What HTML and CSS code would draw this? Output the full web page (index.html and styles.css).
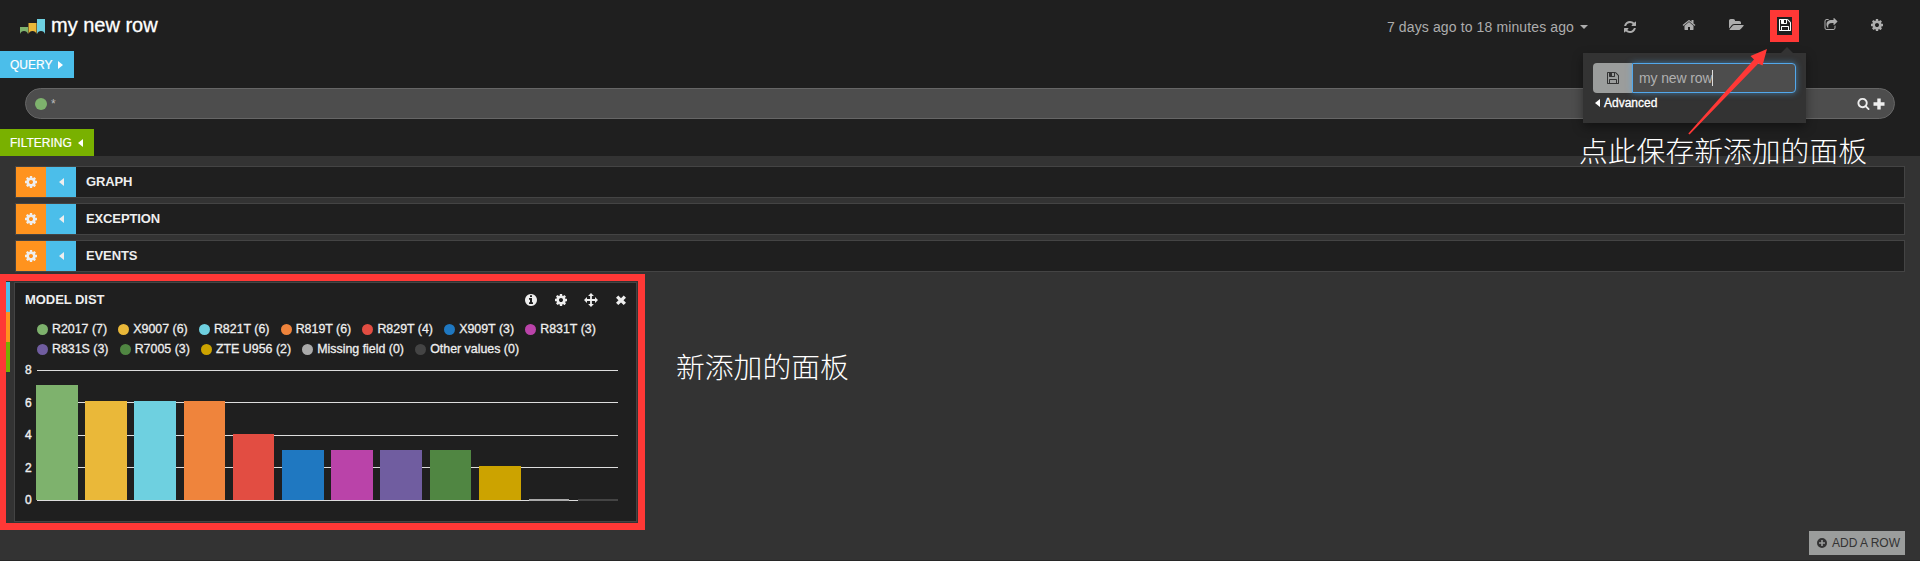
FILE: index.html
```html
<!DOCTYPE html>
<html lang="en">
<head>
<meta charset="utf-8">
<title>my new row</title>
<link rel="stylesheet" href="styles.css">
</head>
<body>
<svg class="sprite" width="0" height="0" aria-hidden="true">
  <symbol id="cog" viewBox="0 0 1792 1792"><path d="M1152 896q0-106-75-181t-181-75-181 75-75 181 75 181 181 75 181-75 75-181zm512-109v222q0 12-8 23t-20 13l-185 28q-19 54-39 91 35 50 107 138 10 12 10 25t-9 23q-27 37-99 108t-94 71q-12 0-26-9l-138-108q-44 23-91 38-16 136-29 186-7 28-36 28h-222q-14 0-24.500-8.500t-11.500-21.500l-28-184q-49-16-90-37l-141 107q-10 9-25 9-14 0-25-11-126-114-165-168-7-10-7-23 0-12 8-23 15-21 51-66.500t54-70.500q-27-50-41-99l-183-27q-13-2-21-12.500t-8-23.500v-222q0-12 8-23t19-13l186-28q14-46 39-92-40-57-107-138-10-12-10-24 0-10 9-23 26-36 98.500-107.500t94.500-71.500q13 0 26 10l138 107q44-23 91-38 16-136 29-186 7-28 36-28h222q14 0 24.500 8.500t11.500 21.500l28 184q49 16 90 37l142-107q9-9 24-9 13 0 25 10 129 119 165 170 7 8 7 22 0 12-8 23-15 21-51 66.500t-54 70.500q26 50 41 98l183 28q13 2 21 12.500t8 23.500z"/></symbol>
  <symbol id="home" viewBox="0 0 1792 1792"><path d="M1472 992v480q0 26-19 45t-45 19h-384v-384h-256v384h-384q-26 0-45-19t-19-45v-480q0-1 .5-3t.5-3l575-474 575 474q1 2 1 6zm223-69l-62 74q-8 9-21 11h-3q-13 0-21-7l-692-577-692 577q-12 8-24 7-13-2-21-11l-62-74q-8-10-7-23.500t11-21.500l719-599q32-26 76-26t76 26l244 204v-195q0-14 9-23t23-9h192q14 0 23 9t9 23v408l219 182q10 8 11 21.500t-7 23.500z"/></symbol>
  <symbol id="refresh" viewBox="0 0 1792 1792"><path d="M1639 1056q0 5-1 7-64 268-268 434.500t-478 166.500q-146 0-282.500-55t-243.500-157l-129 129q-19 19-45 19t-45-19-19-45v-448q0-26 19-45t45-19h448q26 0 45 19t19 45-19 45l-137 137q71 66 161 102t187 36q134 0 250-65t186-179q11-17 53-117 8-23 30-23h192q13 0 22.500 9.500t9.500 22.500zm25-800v448q0 26-19 45t-45 19h-448q-26 0-45-19t-19-45 19-45l138-138q-148-137-349-137-134 0-250 65t-186 179q-11 17-53 117-8 23-30 23h-199q-13 0-22.500-9.500t-9.500-22.500v-7q65-268 270-434.500t480-166.500q146 0 284 55.500t245 156.500l130-129q19-19 45-19t45 19 19 45z"/></symbol>
  <symbol id="folder" viewBox="0 0 1920 1792"><path d="M1879 952q0 31-31 66l-336 396q-43 51-120.500 86.500t-143.500 35.500h-1088q-34 0-60.500-13t-26.500-43q0-31 31-66l336-396q43-51 120.500-86.500t143.500-35.500h1088q34 0 60.500 13t26.500 43zm-343-344v160h-832q-94 0-197 47.500t-164 119.500l-337 396-5 6q0-4-.5-12.500t-.5-12.500v-960q0-92 66-158t158-66h320q92 0 158 66t66 158v32h544q92 0 158 66t66 158z"/></symbol>
  <symbol id="save" viewBox="0 0 1792 1792"><path d="M512 1536h768v-384h-768v384zm896 0h128v-896q0-14-10-38.500t-20-34.500l-281-281q-10-10-34-20t-39-10v416q0 40-28 68t-68 28h-576q-40 0-68-28t-28-68v-416h-128v1280h128v-416q0-40 28-68t68-28h832q40 0 68 28t28 68v416zm-384-928v-320q0-13-9.500-22.500t-22.500-9.500h-192q-13 0-22.500 9.500t-9.500 22.500v320q0 13 9.500 22.500t22.500 9.500h192q13 0 22.500-9.500t9.500-22.500zm640 32v928q0 40-28 68t-68 28h-1344q-40 0-68-28t-28-68v-1344q0-40 28-68t68-28h928q40 0 88 20t76 48l280 280q28 28 48 76t20 88z"/></symbol>
  <symbol id="share" viewBox="0 0 1792 1792"><path d="M1472 989v259q0 119-84.500 203.500t-203.500 84.500h-832q-119 0-203.500-84.500t-84.500-203.500v-832q0-119 84.500-203.500t203.500-84.500h255q13 0 22.500 9.500t9.500 22.500q0 27-26 32-77 26-133 60-10 4-16 4h-112q-66 0-113 47t-47 113v832q0 66 47 113t113 47h832q66 0 113-47t47-113v-214q0-19 18-29 28-13 54-37 16-16 35-8 21 9 21 29zm237-496l-384 384q-18 19-45 19-12 0-25-5-39-17-39-59v-192h-160q-323 0-438 131-119 137-74 473 3 23-20 34-8 2-12 2-16 0-26-13-10-14-21-31t-39.500-68.500-49.500-99.500-38.500-114-17.500-122q0-49 3.500-91t14-90 28-88 47-81.500 68.500-74 94.500-61.500 124.500-48.500 159.500-30.500 196.500-11h160v-192q0-42 39-59 13-5 25-5 26 0 45 19l384 384q19 19 19 45t-19 45z"/></symbol>
  <symbol id="search" viewBox="0 0 1792 1792"><path d="M1216 832q0-185-131.500-316.500t-316.500-131.500-316.500 131.500-131.500 316.500 131.500 316.500 316.500 131.500 316.500-131.500 131.500-316.500zm512 832q0 52-38 90t-90 38q-54 0-90-38l-343-342q-179 124-399 124-143 0-273.500-55.500t-225-150-150-225-55.500-273.500 55.500-273.500 150-225 225-150 273.500-55.500 273.500 55.500 225 150 150 225 55.500 273.500q0 220-124 399l343 343q37 37 37 90z"/></symbol>
  <symbol id="info" viewBox="0 0 1792 1792"><path d="M1152 1376v-160q0-14-9-23t-23-9h-96v-512q0-14-9-23t-23-9h-320q-14 0-23 9t-9 23v160q0 14 9 23t23 9h96v320h-96q-14 0-23 9t-9 23v160q0 14 9 23t23 9h448q14 0 23-9t9-23zm-128-896v-160q0-14-9-23t-23-9h-192q-14 0-23 9t-9 23v160q0 14 9 23t23 9h192q14 0 23-9t9-23zm640 416q0 209-103 385.500t-279.500 279.500-385.500 103-385.500-103-279.500-279.500-103-385.500 103-385.500 279.500-279.500 385.500-103 385.500 103 279.500 279.500 103 385.500z"/></symbol>
  <symbol id="plus" viewBox="0 0 14 14"><path d="M5.300 1.500h3.400v3.800h3.800v3.400h-3.800v3.800h-3.400v-3.800h-3.800v-3.400h3.800z"/></symbol>
  <symbol id="move" viewBox="0 0 14 14"><path d="M7 0l2.900 3h-2v3.100h3.100v-2l3 2.900-3 2.900v-2h-3.100v3.100h2l-2.900 3-2.900-3h2v-3.100h-3.100v2l-3-2.900 3-2.900v2h3.100v-3.100h-2z"/></symbol>
  <symbol id="close" viewBox="0 0 14 14"><path d="M4.300 2.500l2.700 2.700 2.700-2.700 2.300 2.300-2.500 2.500 2.500 2.500-2.300 2.200-2.700-2.600-2.700 2.600-2.300-2.200 2.500-2.500-2.500-2.500z"/></symbol>
  <symbol id="left" viewBox="0 0 5 8"><path d="M5 0v8l-5-4z"/></symbol>
  <symbol id="right" viewBox="0 0 5 8"><path d="M0 0v8l5-4z"/></symbol>
</svg>

<div class="dashboard">
  <header class="top">
    <nav class="navbar">
      <svg class="logo" width="26" height="16" viewBox="0 0 26 16">
        <path fill="#7eb26d" d="M0 8h8v7q-1-3-4-3t-4 3z"/>
        <path fill="#eab839" d="M8.500 4h8v11q-1-3-4-3t-4 3z"/>
        <path fill="#6ed0e0" d="M17 0h8v15q-1-3-4-3t-4 3z"/>
      </svg>
      <span class="brand">my new row</span>
      <div class="controls">
        <span class="time">7 days ago to 18 minutes ago</span>
        <svg class="caret" width="8" height="4" viewBox="0 0 8 4"><path d="M0 0h8l-4 4z"/></svg>
        <svg class="icon refresh"><use href="#refresh"/></svg>
        <svg class="icon"><use href="#home"/></svg>
        <svg class="icon folder"><use href="#folder"/></svg>
        <span class="save"><svg class="icon"><use href="#save"/></svg></span>
        <svg class="icon"><use href="#share"/></svg>
        <svg class="icon settings"><use href="#cog"/></svg>
      </div>
    </nav>
    <div class="tag tag-query">QUERY <svg width="5" height="8"><use href="#right"/></svg></div>
    <div class="query">
      <span class="query-dot"></span><span class="query-text">*</span>
      <svg class="query-search" width="13" height="13"><use href="#search"/></svg>
      <svg width="14" height="14"><use href="#plus"/></svg>
    </div>
    <div class="tag tag-filter">FILTERING <svg width="5" height="8"><use href="#left"/></svg></div>
  </header>

  <main>
    <section class="row"><span class="btn orange"><svg class="icon"><use href="#cog"/></svg></span><span class="btn blue"><svg width="5" height="8"><use href="#left"/></svg></span><span class="row-title">GRAPH</span></section>
    <section class="row"><span class="btn orange"><svg class="icon"><use href="#cog"/></svg></span><span class="btn blue"><svg width="5" height="8"><use href="#left"/></svg></span><span class="row-title">EXCEPTION</span></section>
    <section class="row"><span class="btn orange"><svg class="icon"><use href="#cog"/></svg></span><span class="btn blue"><svg width="5" height="8"><use href="#left"/></svg></span><span class="row-title">EVENTS</span></section>

    <div class="new-row">
      <div class="highlight">
        <div class="handles"><i class="blue"></i><i class="orange"></i><i class="green"></i></div>
        <section class="panel">
          <div class="panel-head">
            <span class="panel-title">MODEL DIST</span>
            <svg class="icon"><use href="#info"/></svg>
            <svg class="icon"><use href="#cog"/></svg>
            <svg class="icon"><use href="#move"/></svg>
            <svg class="icon"><use href="#close"/></svg>
          </div>
          <div class="legend">
            <div class="legend-line">
              <span class="key c1">R2017 (7)</span><span class="key c2">X9007 (6)</span><span class="key c3">R821T (6)</span><span class="key c4">R819T (6)</span><span class="key c5">R829T (4)</span><span class="key c6">X909T (3)</span><span class="key c7">R831T (3)</span>
            </div>
            <div class="legend-line">
              <span class="key c8">R831S (3)</span><span class="key c9">R7005 (3)</span><span class="key c10">ZTE U956 (2)</span><span class="key c11">Missing field (0)</span><span class="key c12">Other values (0)</span>
            </div>
          </div>
          <div class="chart">
            <div class="axis"><span>8</span><span>6</span><span>4</span><span>2</span><span>0</span></div>
            <svg class="plot" width="583" height="134" viewBox="0 0 583 134" shape-rendering="crispEdges">
              <path class="grid" d="M1 1.500h581M1 33.500h581M1 66.500h581M1 98.500h581M1 131.500h581"/>
              <rect x="0" y="16" width="42" height="115" fill="#7eb26d"/>
              <rect x="49" y="32" width="42" height="99" fill="#eab839"/>
              <rect x="98" y="32" width="42" height="99" fill="#6ed0e0"/>
              <rect x="148" y="32" width="41" height="99" fill="#ef843c"/>
              <rect x="197" y="65" width="41" height="66" fill="#e24d42"/>
              <rect x="246" y="81" width="42" height="50" fill="#1f78c1"/>
              <rect x="295" y="81" width="42" height="50" fill="#ba43a9"/>
              <rect x="344" y="81" width="42" height="50" fill="#705da0"/>
              <rect x="394" y="81" width="41" height="50" fill="#508642"/>
              <rect x="443" y="97" width="42" height="34" fill="#cca300"/>
              <rect x="493" y="130" width="40" height="2" fill="#aaaaaa"/>
              <rect x="542" y="130" width="40" height="2" fill="#444444"/>
            </svg>
          </div>
        </section>
      </div>
      <div class="note">新添加的面板</div>
    </div>
    <div class="add"><svg width="10" height="10" viewBox="0 0 10 10"><path fill-rule="evenodd" d="M5 0a5 5 0 1 1 0 10a5 5 0 1 1 0-10zM4.200 2v2.200h-2.200v1.600h2.200v2.200h1.600v-2.200h2.200v-1.600h-2.200v-2.200z"/></svg>ADD A ROW</div>
  </main>

  <div class="popover">
    <div class="save-form">
      <span class="save-btn"><svg class="icon"><use href="#save"/></svg></span>
      <span class="save-input">my new row<i></i></span>
    </div>
    <div class="advanced"><svg width="5" height="8"><use href="#left"/></svg>Advanced</div>
  </div>
  <svg class="arrow" width="80" height="87" viewBox="0 0 80 87"><path d="M79 0L74.500 16.500l-4.200-2L1.500 85.500 .3 84.500 66 10.500l-3.500-3.500z"/></svg>
  <div class="note note-save">点此保存新添加的面板</div>
</div>
</body>
</html>
```
FILE: styles.css
```css
* { box-sizing: border-box; }
body {
  margin: 0;
  background: #333;
  font: 12px/20px "Liberation Sans", Arial, sans-serif;
  color: #eee;
}
svg { display: block; fill: currentColor; flex: none; }
.sprite { position: absolute; }
.icon { width: 14px; height: 14px; }
.dashboard {
  position: relative;
  width: 1920px;
  height: 561px;
  overflow: hidden;
  border-bottom: 1px solid #272727;
}
.top { height: 156px; background: #1f1f1f; }

.navbar { display: flex; height: 51px; padding-left: 20px; align-items: flex-start; }
.logo { margin-top: 19px; }
.brand {
  margin: 15px 0 0 5px;
  font-size: 20px;
  line-height: 20px;
  color: #fff;
  -webkit-text-stroke: .3px #fff;
}
.controls {
  display: flex;
  align-items: center;
  height: 50px;
  margin-left: auto;
  padding-right: 36px;
  color: #adadad;
}
.time { margin-top: 3px; font-size: 14px; letter-spacing: .12px; }
.caret { margin: 3px 35px 0 6px; }
.refresh { margin: 3px 45px 0 0; }
.folder { width: 15px; margin-left: 33px; }
.save {
  display: flex;
  align-items: center;
  justify-content: center;
  width: 29px;
  height: 32px;
  margin: 2px 25px 0 26px;
  padding-bottom: 2px;
  border: 7px solid #ff3836;
  color: #fff;
}
.settings { margin-left: 32px; }

.tag {
  display: flex;
  align-items: center;
  gap: 6px;
  height: 27px;
  padding-left: 10px;
  color: #fff;
  -webkit-text-stroke: .2px #fff;
}
.tag-query { width: 74px; background: #4bbeea; }
.tag-filter { width: 94px; background: #79b100; }
.query {
  display: flex;
  align-items: center;
  height: 31px;
  margin: 10px 25px;
  padding: 0 8px 0 9px;
  border: 1px solid #666;
  border-radius: 16px;
  background: #4d4d4d;
}
.query-dot { width: 12px; height: 12px; margin-right: 4px; border-radius: 50%; background: #7eb26d; }
.query-text { color: #bbb; }
.query-search { margin: 0 2px 0 auto; }

main { padding: 10px 15px 0; }
.row {
  display: flex;
  height: 32px;
  margin-bottom: 5px;
  border: 1px solid #444;
  background: #1f1f1f;
}
.btn { display: flex; align-items: center; justify-content: center; width: 30px; height: 30px; }
.orange { background: #ff931e; }
.blue { background: #4bbeea; }
.green { background: #79b100; }
.row-title { padding: 5px 10px; font-weight: bold; font-size: 13px; letter-spacing: -.12px; }

.new-row { display: flex; margin: -3px 0 0 -15px; }
.highlight {
  display: flex;
  width: 645px;
  height: 256px;
  border: 7px solid #ff3836;
  border-left-width: 6px;
}
.handles { display: flex; flex-direction: column; width: 4px; margin: 1px 4px 0 0; }
.handles i { height: 30px; }
.panel {
  width: 623px;
  height: 240px;
  margin-top: 1px;
  padding: 0 8px 0 10px;
  border: 1px solid #444;
  background: #1f1f1f;
}
.panel-head { display: flex; align-items: center; gap: 16px; height: 34px; }
.panel-title { margin-right: auto; font-weight: bold; font-size: 13px; letter-spacing: -.05px; }
.legend { height: 44px; padding: 2px 0 0 12px; }
.legend-line { display: flex; gap: 11.200px; height: 20px; }
.key {
  display: flex;
  align-items: center;
  gap: 4px;
  font-size: 12.400px;
  white-space: nowrap;
  -webkit-text-stroke: .3px #eee;
}
.key::before { content: ""; width: 11px; height: 11px; border-radius: 50%; background: var(--dot); }
.c1 { --dot: #7eb26d; } .c2 { --dot: #eab839; } .c3 { --dot: #6ed0e0; } .c4 { --dot: #ef843c; }
.c5 { --dot: #e24d42; } .c6 { --dot: #1f78c1; } .c7 { --dot: #ba43a9; } .c8 { --dot: #705da0; }
.c9 { --dot: #508642; } .c10 { --dot: #cca300; } .c11 { --dot: #aaa; } .c12 { --dot: #444; }
.chart { display: flex; gap: 4px; padding-top: 8px; }
.axis {
  display: flex;
  flex-direction: column;
  justify-content: space-between;
  width: 7px;
  height: 150px;
  margin-top: -9px;
  -webkit-text-stroke: .4px #eee;
}
.grid { stroke: #ddd; fill: none; }

.note {
  margin: 71px 0 0 31px;
  font: 300 28.800px/42px "Noto Sans CJK SC", sans-serif;
  color: #fff;
  white-space: nowrap;
}
.add {
  display: flex;
  align-items: center;
  gap: 5px;
  width: 96px;
  height: 24px;
  margin: 1px 0 0 auto;
  padding-left: 8px;
  background: #9b9d9c;
  color: #333;
  white-space: nowrap;
}

.popover {
  position: absolute;
  left: 1583px;
  top: 53px;
  width: 223px;
  height: 70px;
  padding: 10px;
  background: #333;
  box-shadow: 0 4px 10px rgba(0, 0, 0, .4);
}
.popover::before {
  content: "";
  position: absolute;
  left: 198px;
  top: -6px;
  border: solid transparent;
  border-width: 0 6px 6px;
  border-bottom-color: #333;
}
.save-form { display: flex; height: 30px; }
.save-btn {
  display: flex;
  align-items: center;
  justify-content: center;
  width: 39px;
  border-radius: 4px 0 0 4px;
  background: #9b9d9c;
  color: #333;
}
.save-input {
  display: flex;
  align-items: center;
  width: 164px;
  padding-left: 6px;
  border: 1px solid #52a8ec;
  border-radius: 0 4px 4px 0;
  background: #4d4d4d;
  box-shadow: 0 0 6px rgba(82, 168, 236, .6);
  color: #b0b0b0;
  font-size: 14px;
  letter-spacing: -.12px;
}
.save-input i { width: 1px; height: 16px; background: #ddd; }
.advanced {
  display: flex;
  align-items: center;
  gap: 4px;
  padding-left: 2px;
  color: #fff;
  -webkit-text-stroke: .3px #fff;
}
.arrow { position: absolute; left: 1688px; top: 49px; fill: #ff3836; }
.note-save { position: absolute; left: 1579px; top: 129px; margin: 0; }
```
